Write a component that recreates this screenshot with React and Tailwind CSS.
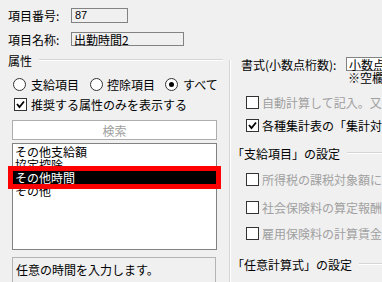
import React from 'react';

function Radio({ checked }) {
  return (
    <span className="w-[13px] h-[13px] rounded-full border border-[#333] bg-white flex items-center justify-center shrink-0">
      {checked && <span className="w-[5px] h-[5px] rounded-full bg-black" />}
    </span>
  );
}

function Check({ checked }) {
  return (
    <span className="w-[13px] h-[13px] border border-[#333] bg-white flex items-center justify-center shrink-0">
      {checked && (
        <svg width="11" height="11" viewBox="0 0 11 11">
          <polyline points="2,5 4.5,8 9,2.5" fill="none" stroke="#000" strokeWidth="1.8" />
        </svg>
      )}
    </span>
  );
}

function CheckRow({ checked, disabled, children, className }) {
  return (
    <div className={'flex items-center h-[14px] pl-[15px] gap-[3px] ' + className}>
      <Check checked={checked} />
      <span className={disabled ? 'text-[#a0a0a0]' : 'text-black'}>{children}</span>
    </div>
  );
}

function GroupTitle({ children, className }) {
  return (
    <div className={'flex items-center h-[14px] ' + className}>
      <span>{children}</span>
      <span className="flex-1 ml-[7px] border-t border-[#d5d5d5] border-b border-b-white" />
    </div>
  );
}

export default function App() {
  const items = ['その他支給額', '協定控除', 'その他時間', 'その他'];

  return (
    <div className="w-[382px] h-[282px] overflow-hidden bg-[#f0f0f0] text-[12px] leading-[13px] text-black whitespace-nowrap font-['Noto_Sans_CJK_JP','Noto_Sans_CJK_SC',sans-serif]">
      {/* header fields */}
      <div className="pt-[8px] pl-[8px]">
        <div className="flex items-center h-[15px]">
          <span className="w-[63px]">項目番号:</span>
          <div className="w-[57px] h-[15px] border border-[#828282] px-[3px] flex items-center font-['Liberation_Sans',sans-serif] text-[11px]">87</div>
        </div>
        <div className="flex items-center h-[14px] mt-[9px]">
          <span className="w-[63px]">項目名称:</span>
          <div className="w-[113px] h-[14px] border border-[#828282] px-[2px] flex items-center">出勤時間2</div>
        </div>
      </div>

      <div className="flex mt-[7px]">
        {/* left: 属性 */}
        <div className="w-[223px] shrink-0 pl-[8px]">
          <GroupTitle>属性</GroupTitle>

          <div className="flex items-center h-[14px] mt-[10px] ml-[5px]">
            <Radio />
            <span className="ml-[5px]">支給項目</span>
            <span className="ml-[11px]"><Radio /></span>
            <span className="ml-[4px]">控除項目</span>
            <span className="ml-[10px]"><Radio checked /></span>
            <span className="ml-[5px]">すべて</span>
          </div>

          <div className="flex items-center h-[14px] mt-[6px] ml-[6px] gap-[4px]">
            <Check checked />
            <span>推奨する属性のみを表示する</span>
          </div>

          <div className="w-[205px] h-[20px] mt-[9px] ml-[4px] bg-white border border-[#adadad] flex items-center justify-center text-[#a0a0a0]">
            検索
          </div>

          <div className="w-[205px] h-[107px] mt-[3px] ml-[4px] bg-white border border-[#828282] pt-px">
            {items.map((t, i) =>
              i === 2 ? (
                <div key={t} className="relative z-10 h-[13px] flex items-center pl-[2px] bg-black text-white outline-[5px] outline-solid outline-[#ff0000]">
                  {t}
                </div>
              ) : (
                <div key={t} className="h-[13px] flex items-center pl-[2px]">{t}</div>
              )
            )}
          </div>

          <div className="w-[204px] h-[40px] mt-[7px] ml-[4px] border border-[#b4b4b4] pt-[5px] pl-[3px]">
            任意の時間を入力します。
          </div>
        </div>

        {/* right */}
        <div className="flex flex-1 ml-[6px]">
          <div className="w-[2px] mt-[7px] border-l border-[#d5d5d5] border-r border-r-white" />
          <div className="flex-1">
            <div className="flex items-center h-[14px] mt-[4px]">
              <span className="w-[105px] ml-[10px]">書式(小数点桁数):</span>
              <div className="flex-1 h-[14px] bg-white border border-[#828282] border-r-0 pl-[2px] flex items-center">小数点以下桁数</div>
            </div>
            <div className="h-[13px] flex items-center pl-[117px]">※空欄の場合</div>

            <CheckRow disabled className="mt-[11px]">自動計算して記入。又は手入力</CheckRow>
            <CheckRow checked className="mt-[9px]">各種集計表の「集計対象」に含める</CheckRow>

            <GroupTitle className="mt-[14px] pl-[1px]">「支給項目」の設定</GroupTitle>

            <CheckRow disabled className="mt-[12px]">所得税の課税対象額に含める</CheckRow>
            <CheckRow disabled className="mt-[14px]">社会保険料の算定報酬に含める</CheckRow>
            <CheckRow disabled className="mt-[12px]">雇用保険料の計算賃金に含める</CheckRow>

            <GroupTitle className="mt-[17px] pl-[1px]">「任意計算式」の設定</GroupTitle>
          </div>
        </div>
      </div>
    </div>
  );
}
